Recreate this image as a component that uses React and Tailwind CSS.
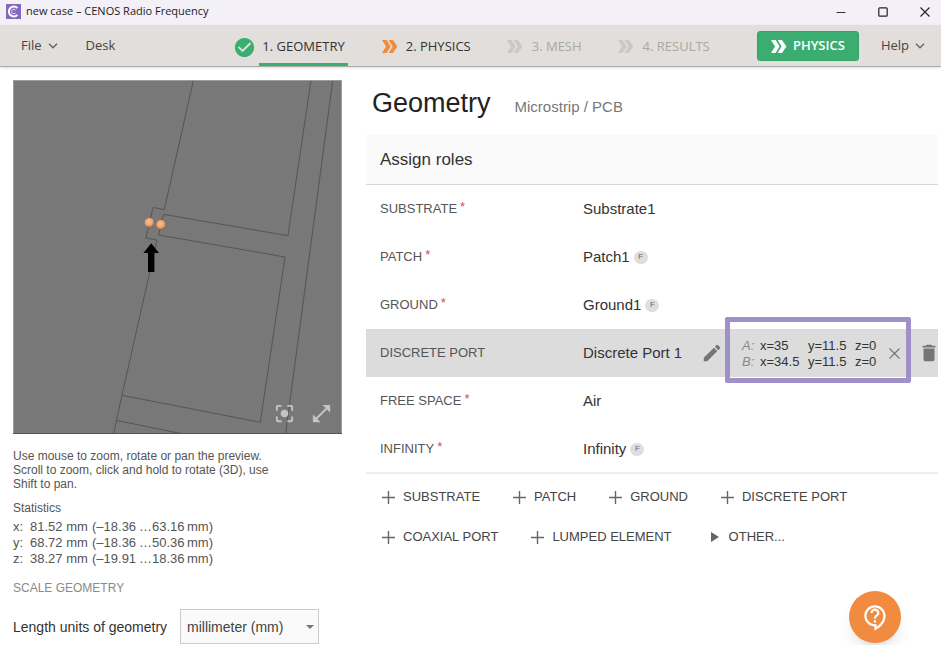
import {
  MdCenterFocusStrong,
  MdCheckCircle,
  MdDelete,
  MdEdit,
  MdOpenInFull,
  MdOutlineContactSupport,
} from "react-icons/md";

const roles = [
  { label: "SUBSTRATE", required: true, value: "Substrate1" },
  { label: "PATCH", required: true, value: "Patch1", face: true },
  { label: "GROUND", required: true, value: "Ground1", face: true },
  { label: "DISCRETE PORT", value: "Discrete Port 1", selected: true },
  { label: "FREE SPACE", required: true, value: "Air" },
  { label: "INFINITY", required: true, value: "Infinity", face: true },
];

const portPoints = [
  { name: "A:", x: "x=35", y: "y=11.5", z: "z=0" },
  { name: "B:", x: "x=34.5", y: "y=11.5", z: "z=0" },
];

const statistics = [
  { axis: "x:", size: "81.52 mm", from: "(–18.36", to: "…63.16", unit: "mm)" },
  { axis: "y:", size: "68.72 mm", from: "(–18.36", to: "…50.36", unit: "mm)" },
  { axis: "z:", size: "38.27 mm", from: "(–19.91", to: "…18.36", unit: "mm)" },
];

const additions = ["SUBSTRATE", "PATCH", "GROUND", "DISCRETE PORT", "COAXIAL PORT", "LUMPED ELEMENT"];

function DoubleChevron({ className }) {
  return (
    <svg viewBox="0 0 16 13" className={className} fill="currentColor" aria-hidden="true">
      <path d="M0 0h4.6l4 6.5-4 6.5H0l4-6.5z" />
      <path d="M6.6 0h4.4l4.4 6.5-4.4 6.5H6.6l4-6.5z" />
    </svg>
  );
}

function ChevronDown() {
  return (
    <svg viewBox="0 0 10 6" className="h-1.5 w-2.5" fill="none" stroke="#666" strokeWidth="1.4" aria-hidden="true">
      <path d="M1 .8l4 4 4-4" />
    </svg>
  );
}

function TitleBar() {
  return (
    <header className="flex h-[25px] items-center bg-[#f3f0f7] pb-0.5 pl-1.5 font-['Open_Sans',sans-serif] text-[11px] text-[#1c1c1c]">
      <svg viewBox="0 0 15 15" className="size-[15px]" aria-hidden="true">
        <rect width="15" height="15" fill="#8468c0" />
        <path d="M11.4 4.2A4.9 4.9 0 1 0 11.4 10.8" fill="none" stroke="#fff" strokeWidth="2" />
        <path d="M9.6 6.1a2.2 2.2 0 1 0 0 2.8" fill="none" stroke="#e4dcf4" strokeWidth="1" />
      </svg>
      <span className="ml-[5px]">new case – CENOS Radio Frequency</span>
      <div className="ml-auto flex items-center gap-8 pr-[11px]">
        <button aria-label="Minimize">
          <svg viewBox="0 0 10 10" className="size-2.5" stroke="#333">
            <path d="M.5 5.5h9" />
          </svg>
        </button>
        <button aria-label="Maximize">
          <svg viewBox="0 0 10 10" className="size-2.5" fill="none" stroke="#222" strokeWidth="1.2">
            <rect x=".8" y=".8" width="8.4" height="8.4" rx="1" />
          </svg>
        </button>
        <button aria-label="Close">
          <svg viewBox="0 0 10 10" className="size-2.5" stroke="#222" strokeWidth="1.1">
            <path d="M.5.5l9 9M9.5.5l-9 9" />
          </svg>
        </button>
      </div>
    </header>
  );
}

function NavBar() {
  return (
    <nav className="flex h-[42px] items-stretch border-b border-[#aeabaa] bg-[#e1dedb] pl-[21px] pr-4 pt-px font-['Open_Sans',sans-serif] text-[13px] text-[#444] shadow-sm">
      <button className="flex items-center gap-1.5">
        File <ChevronDown />
      </button>
      <button className="ml-7">Desk</button>
      <div className="ml-[118px] flex items-stretch gap-9">
        <a href="#geometry" className="-mr-0.5 flex items-stretch text-[#333]">
          <MdCheckCircle className="mt-0.5 size-[23px] self-center text-[#3aae70]" />
          <span className="ml-[3px] flex items-center rounded-t-xs border-b-3 border-[#3aae70] px-[3px] pt-1">
            1. GEOMETRY
          </span>
        </a>
        <a href="#physics" className="flex items-center gap-2 pt-px text-[#333]">
          <DoubleChevron className="h-[13px] w-4 text-[#f28c3c]" />
          2. PHYSICS
        </a>
        <a href="#mesh" className="flex items-center gap-[9px] pt-px text-[#aaa8a6]">
          <DoubleChevron className="h-[13px] w-4 text-[#cbc8c7]" />
          3. MESH
        </a>
        <a href="#results" className="flex items-center gap-[9px] pt-px text-[#aaa8a6]">
          <DoubleChevron className="h-[13px] w-4 text-[#cbc8c7]" />
          4. RESULTS
        </a>
      </div>
      <button className="ml-auto flex h-[30px] items-center gap-1.5 self-center rounded-[3px] border border-[#35a467] bg-[#3cad71] px-[13px] font-semibold text-white">
        <DoubleChevron className="h-[13px] w-4" />
        PHYSICS
      </button>
      <button className="ml-[22px] flex items-center gap-1.5">
        Help <ChevronDown />
      </button>
    </nav>
  );
}

function Preview() {
  return (
    <div className="relative">
      <svg viewBox="13 80 329 354" className="block w-full bg-[#787878]" role="img" aria-label="Geometry preview">
        <defs>
          <radialGradient id="port" cx="45%" cy="40%" r="60%">
            <stop offset="0" stopColor="#ffc290" />
            <stop offset=".65" stopColor="#eda069" />
            <stop offset="1" stopColor="#9a6238" />
          </radialGradient>
        </defs>
        <g fill="none" stroke="#555" strokeWidth="1">
          <path d="M193.5 80L164.3 209.5 153 207.5 146 238 157 240 122 395 113.5 434" />
          <path d="M311 80L288 235.7 163.3 214.3 158.7 235 285 257 260.3 422.3 122 395.3" />
          <path d="M332.8 80L285.6 434" />
          <path d="M116 420.3L183 434" />
        </g>
        <circle cx="149.4" cy="222.7" r="4.8" fill="url(#port)" />
        <circle cx="161" cy="224.8" r="4.8" fill="url(#port)" />
        <path d="M151.2 243.3L159 253h-4.6v19h-6.4v-19h-4.6z" fill="#000" />
        <path d="M13.5 434V80.5H341.5V434" fill="none" stroke="#9a9d9a" />
        <path d="M13 433.5H342" stroke="#46586c" />
      </svg>
      <div className="absolute bottom-[9px] right-[9px] flex gap-3.5 text-[#c4c4c4]">
        <button aria-label="Center view">
          <MdCenterFocusStrong className="size-[23px]" />
        </button>
        <button aria-label="Expand preview">
          <MdOpenInFull className="size-[23px]" />
        </button>
      </div>
    </div>
  );
}

function Sidebar() {
  return (
    <aside className="w-[329px] shrink-0 text-xs text-[#555]">
      <Preview />
      <p className="mt-[15px] max-w-[270px] leading-[14px]">
        Use mouse to zoom, rotate or pan the preview. Scroll to zoom, click and hold to rotate (3D), use Shift to pan.
      </p>
      <h2 className="mt-[9px] leading-4">Statistics</h2>
      <table className="mt-[3px] text-[13px] leading-4">
        <tbody>
          {statistics.map((s) => (
            <tr key={s.axis}>
              <th scope="row" className="w-[17px] p-0 text-left font-normal">{s.axis}</th>
              <td className="w-[62px] p-0">{s.size}</td>
              <td className="w-[47px] p-0">{s.from}</td>
              <td className="w-12 p-0">{s.to}</td>
              <td className="p-0">{s.unit}</td>
            </tr>
          ))}
        </tbody>
      </table>
      <h2 className="mt-[13px] leading-4 text-[#8a8a8a]">SCALE GEOMETRY</h2>
      <div className="mt-[13px] flex items-center text-sm text-[#333]">
        <label htmlFor="units" className="w-[167px]">Length units of geometry</label>
        <div className="relative">
          <select
            id="units"
            className="block h-[35px] w-[139px] appearance-none border border-[#ccc] bg-[#fafafa] pl-1.5 text-sm text-[#444]"
          >
            <option>millimeter (mm)</option>
          </select>
          <svg viewBox="0 0 8 4" className="pointer-events-none absolute right-[5px] top-4 h-1 w-2" fill="#777" aria-hidden="true">
            <path d="M0 0h8L4 4z" />
          </svg>
        </div>
      </div>
    </aside>
  );
}

function PortTools() {
  return (
    <div className="-mr-0.5 ml-auto flex h-full items-center">
      <button aria-label="Edit port" className="text-[#757575]">
        <MdEdit className="size-[22px]" />
      </button>
      <div className="relative ml-0.5 flex h-full w-[186px] items-center pl-[17px]">
        <div className="pt-0.5 text-[13px] leading-4 text-[#333]">
          {portPoints.map((p) => (
            <div key={p.name} className="grid grid-cols-[18px_48px_47px_34px]">
              <em className="text-[#888]">{p.name}</em>
              <span>{p.x}</span>
              <span>{p.y}</span>
              <span>{p.z}</span>
            </div>
          ))}
        </div>
        <button aria-label="Clear points">
          <svg viewBox="0 0 11 11" className="size-[11px]" stroke="#777" strokeWidth="1.2">
            <path d="M.5.5l10 10M10.5.5l-10 10" />
          </svg>
        </button>
        <div className="pointer-events-none absolute inset-x-0 -bottom-1.5 -top-3 rounded-xs border-5 border-[#9f90c8]" />
      </div>
      <button aria-label="Delete port" className="ml-[7px] text-[#757575]">
        <MdDelete className="size-[22px]" />
      </button>
    </div>
  );
}

function RoleRow({ role }) {
  return (
    <li className={role.selected ? "flex h-12 items-center bg-[#dcdcdc] pl-3.5" : "flex h-12 items-center pl-3.5"}>
      <span className="flex w-[203px] shrink-0 gap-[3px] text-[13px] text-[#555]">
        {role.label}
        {role.required && <span className="-mt-0.5 text-[#e8435a]">*</span>}
      </span>
      <span className="whitespace-nowrap text-[15px] text-[#333]">{role.value}</span>
      {role.face && (
        <span className="ml-1 flex h-[13px] w-3.5 items-center justify-center rounded-full bg-[#dedede] text-[8px] text-[#666]">
          F
        </span>
      )}
      {role.selected && <PortTools />}
    </li>
  );
}

function Roles() {
  return (
    <section className="min-w-0 flex-1">
      <div className="flex items-baseline gap-6 pl-1.5 pt-[3px]">
        <h1 className="text-[27px] leading-10 text-[#222]">Geometry</h1>
        <span className="text-[15px] text-[#777]">Microstrip / PCB</span>
      </div>
      <h2 className="mt-3 flex h-[50px] items-center border-b border-[#d8d8d8] bg-[#fafafa] pl-3.5 text-[17px] text-[#333]">
        Assign roles
      </h2>
      <ul className="h-[289px] border-b-2 border-[#eee]">
        {roles.map((role) => (
          <RoleRow key={role.label} role={role} />
        ))}
      </ul>
      <div className="flex flex-wrap gap-x-[33px] pl-4 pt-[3px] text-[13px] text-[#444]">
        {additions.map((name) => (
          <button key={name} className="flex h-10 items-center gap-2">
            <svg viewBox="0 0 13 13" className="size-[13px]" stroke="#666" strokeWidth="1.4" aria-hidden="true">
              <path d="M6.5 0v13M0 6.5h13" />
            </svg>
            {name}
          </button>
        ))}
        <button className="flex h-10 items-center gap-2.5 pl-1.5">
          <svg viewBox="0 0 8 10" className="h-2.5 w-2" fill="#666" aria-hidden="true">
            <path d="M0 0l8 5-8 5z" />
          </svg>
          OTHER...
        </button>
      </div>
    </section>
  );
}

export default function App() {
  return (
    <div className="bg-white font-['Liberation_Sans',Arial,sans-serif]">
      <TitleBar />
      <NavBar />
      <main className="flex gap-6 pl-[13px] pr-[3px] pt-[13px]">
        <Sidebar />
        <Roles />
      </main>
      <button
        aria-label="Support"
        className="fixed bottom-0.5 right-10 flex size-[52px] items-center justify-center rounded-full bg-[#f08b40] text-white shadow-lg"
      >
        <MdOutlineContactSupport className="size-[27px]" />
      </button>
    </div>
  );
}
